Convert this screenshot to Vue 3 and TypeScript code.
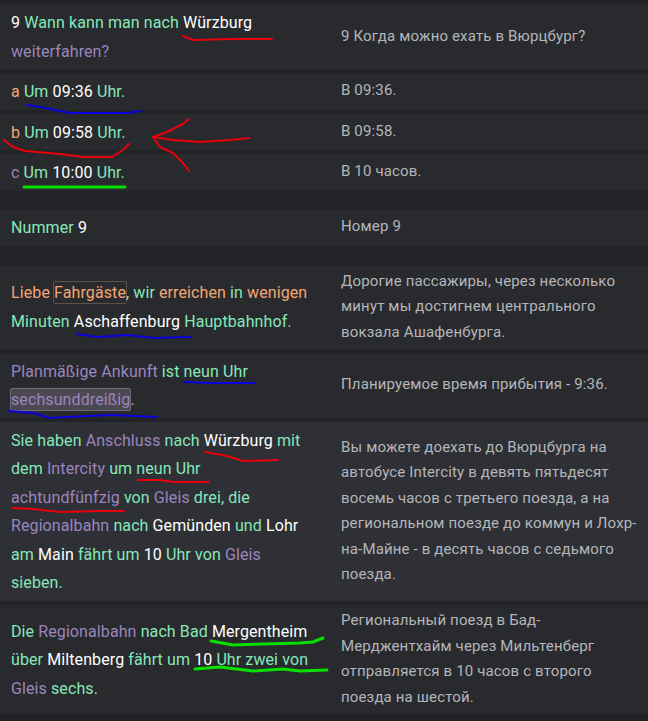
<script setup lang="ts">
type Seg = [string, string];
interface Row {
  left: Seg[];
  right: string;
  cls?: string;
}
const rows: Row[] = [
  { left: [["w","9 "],["m","Wann kann man nach "],["w","Würzburg"],["m"," "],["p","weiterfahren?"]], right: "9 Когда можно ехать в Вюрцбург?" },
  { left: [["o","a "],["m","Um "],["w","09:36 "],["m","Uhr."]], right: "В 09:36." },
  { left: [["o","b "],["m","Um "],["w","09:58 "],["m","Uhr."]], right: "В 09:58." },
  { left: [["p","c "],["m","Um "],["w","10:00 "],["m","Uhr."]], right: "В 10 часов." },
  { left: [["m","Nummer "],["w","9"]], right: "Номер 9", cls: "section" },
  { left: [["o","Liebe "],["o box","Fahrgäste"],["m",", wir "],["o","erreichen "],["m","in "],["o","wenigen "],["m","Minuten "],["w","Aschaffenburg "],["m","Hauptbahnhof"],["g","."]], right: "Дорогие пассажиры, через несколько минут мы достигнем центрального вокзала Ашафенбурга.", cls: "section-b" },
  { left: [["p","Planmäßige Ankunft "],["m","ist neun Uhr "],["p sel","sechsunddreißig"],["g","."]], right: "Планируемое время прибытия - 9:36." },
  { left: [["m","Sie haben "],["p","Anschluss "],["m","nach "],["w","Würzburg "],["m","mit "],["m","dem "],["p","Intercity "],["m","um neun Uhr "],["p","achtundfünfzig "],["m","von "],["p","Gleis "],["m","drei, die "],["p","Regionalbahn "],["m","nach "],["w","Gemünden "],["m","und "],["w","Lohr "],["m","am "],["w","Main "],["m","fährt um "],["w","10 "],["m","Uhr von "],["p","Gleis "],["m","sieben."]], right: "Вы можете доехать до Вюрцбурга на автобусе Intercity в девять пятьдесят восемь часов с третьего поезда, а на региональном поезде до коммун и Лохр-на-Майне - в десять часов с седьмого поезда.", cls: "active" },
  { left: [["m","Die "],["p","Regionalbahn "],["m","nach Bad "],["w","Mergentheim "],["m","über "],["w","Miltenberg "],["m","fährt um "],["w","10 "],["m","Uhr zwei von "],["p","Gleis "],["m","sechs."]], right: "Региональный поезд в Бад-Мерджентхайм через Мильтенберг отправляется в 10 часов с второго поезда на шестой." },
];

const strokes: { color: string; width: number; d: string }[] = [
  { color: "#e8000c", width: 2, d: "M183 36 L193 40 L233 39 L272 39" },
  { color: "#0a00e0", width: 2, d: "M27 105 L40 107 L70 113 L127 113 L141 111" },
  { color: "#e8000c", width: 2, d: "M4 140 L13 147 L25 151 L60 154 L83 157 L112 157 L123 150 L129 144" },
  { color: "#e8000c", width: 2, d: "M249 138 L230 140 L200 142 L173 140 L153 137" },
  { color: "#e8000c", width: 2, d: "M153 137 L167 132 L183 124 L189 119" },
  { color: "#e8000c", width: 2, d: "M153 137 L160 147 L173 153 L183 163 L189 171" },
  { color: "#08e000", width: 3, d: "M24 187 L125 187" },
  { color: "#0a00e0", width: 2, d: "M77 334 L97 337 L127 335 L153 338 L190 337" },
  { color: "#0a00e0", width: 2, d: "M184 382 L207 383 L254 383" },
  { color: "#0a00e0", width: 2, d: "M9 411 L33 413 L50 418 L87 416 L113 415 L157 417" },
  { color: "#e8000c", width: 2, d: "M205 452 L227 456 L243 461 L278 460" },
  { color: "#e8000c", width: 2, d: "M138 480 L160 480 L173 482 L209 482" },
  { color: "#e8000c", width: 2, d: "M13 508 L33 509 L60 512 L100 511 L124 511" },
  { color: "#08e000", width: 3, d: "M211 641 L233 645 L300 643 L313 642 L323 638" },
  { color: "#08e000", width: 3, d: "M195 669 L220 667 L253 671 L283 669 L300 671 L327 670" },
];
</script>

<template>
  <div class="page">
    <div class="table">
      <div v-for="(row, i) in rows" :key="i" class="row" :class="row.cls">
        <div class="left">
          <span v-for="(seg, j) in row.left" :key="j" :class="seg[0]">{{ seg[1] }}</span>
        </div>
        <div class="right">{{ row.right }}</div>
      </div>
    </div>
    <svg class="ink" width="648" height="721" viewBox="0 0 648 721" fill="none">
      <path
        v-for="(s, i) in strokes"
        :key="i"
        :d="s.d"
        :stroke="s.color"
        :stroke-width="s.width"
        stroke-linecap="round"
        stroke-linejoin="round"
      />
    </svg>
  </div>
</template>

<style>
html,
body {
  margin: 0;
  background: #222327;
}
</style>

<style scoped>
.page {
  position: relative;
  width: 648px;
  height: 721px;
  overflow: hidden;
  background: #222327;
  font-family: Roboto, "Noto Sans", sans-serif;
}
.table {
  display: flex;
  flex-direction: column;
  gap: 4px;
  padding-top: 4px;
}
.row {
  display: grid;
  grid-template-columns: 330px 1fr;
  align-items: center;
  background: #292a2e;
}
.row.section {
  margin-top: 14.5px;
}
.row.section-b {
  margin-top: 15.5px;
}
.row.active {
  background: #2e3035;
}
.left {
  padding: 5px 18px 3px 11px;
  font-size: 16px;
  letter-spacing: 0.1px;
  line-height: 28.5px;
}
.right {
  padding: 3.5px 10px 3.5px 11px;
  font-size: 15px;
  letter-spacing: 0.15px;
  line-height: 25.6px;
  color: #b4b6ba;
}
.m {
  color: #85e8b9;
}
.w {
  color: #ffffff;
}
.p {
  color: #9b85bd;
}
.o {
  color: #f4a671;
}
.g {
  color: #b4b6ba;
}
.box {
  border: 1px solid #5c5248;
  border-radius: 2px;
  padding: 1px 0;
  margin: 0 -1px;
}
.sel {
  border: 1px solid #6f6a78;
  border-radius: 2px;
  background: #4c4852;
  padding: 1px 0;
  margin: 0 -1px;
}
.ink {
  position: absolute;
  top: 0;
  left: 0;
  pointer-events: none;
}
</style>
